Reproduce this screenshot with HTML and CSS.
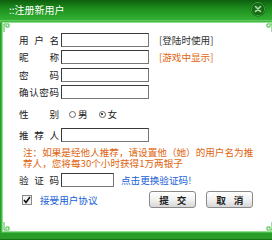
FILE: index.html
```html
<!DOCTYPE html>
<html>
<head>
<meta charset="utf-8">
<link rel="stylesheet" href="styles.css">
</head>
<body>
<div class="win">
  <div class="title">
    <span class="title-text">::注册新用户</span>
    <svg class="close" width="16" height="16" viewBox="0 0 16 16">
      <circle cx="8" cy="8" r="7.5" fill="#0f5a0f"/>
      <circle cx="8" cy="8" r="6.5" fill="none" stroke="#3fae3f" stroke-width="1"/>
      <circle cx="8" cy="8" r="5" fill="#1c6e1c"/>
      <path d="M5.5 5.5 L10.5 10.5 M10.5 5.5 L5.5 10.5" stroke="#a8e0a8" stroke-width="1.6" stroke-linecap="round"/>
    </svg>
  </div>
  <div class="frame">
    <div class="panel">
      <svg class="corner tl" width="10" height="10" viewBox="0 0 10 10"><path d="M1 9 V1 H6 V4 H3 V2" fill="none" stroke="#3dbb3d" stroke-width="1"/></svg>
      <svg class="corner tr" width="10" height="10" viewBox="0 0 10 10"><path d="M9 9 V1 H4 V4 H7 V2" fill="none" stroke="#3dbb3d" stroke-width="1"/></svg>
      <svg class="corner bl" width="10" height="10" viewBox="0 0 10 10"><path d="M1 1 V9 H6 V6 H3 V8" fill="none" stroke="#3dbb3d" stroke-width="1"/></svg>
      <svg class="corner br" width="10" height="10" viewBox="0 0 10 10"><path d="M9 1 V9 H4 V6 H7 V8" fill="none" stroke="#3dbb3d" stroke-width="1"/></svg>
      <div class="form">
        <div class="row r1">
          <span class="label"><i>用</i><i>户</i><i>名</i></span>
          <span class="input"></span>
          <span class="hint">[登陆时使用]</span>
        </div>
        <div class="row r2">
          <span class="label"><i>昵</i><i>称</i></span>
          <span class="input"></span>
          <span class="hint orange">[游戏中显示]</span>
        </div>
        <div class="row r3">
          <span class="label"><i>密</i><i>码</i></span>
          <span class="input"></span>
        </div>
        <div class="row r4">
          <span class="label"><i>确</i><i>认</i><i>密</i><i>码</i></span>
          <span class="input"></span>
        </div>
        <div class="row r5">
          <span class="label"><i>性</i><i>别</i></span>
          <span class="radio first"></span><span class="rtext">男</span>
          <span class="radio on"></span><span class="rtext">女</span>
        </div>
        <div class="row r6">
          <span class="label"><i>推</i><i>荐</i><i>人</i></span>
          <span class="input"></span>
        </div>
        <div class="note">
          <div class="nline">注：如果是经他人推荐，请设置他（她）的用户名为推</div>
          <div class="nline">荐人，您将每30个小时获得1万两银子</div>
        </div>
        <div class="row r7">
          <span class="label"><i>验</i><i>证</i><i>码</i></span>
          <span class="input short"></span>
          <span class="link">点击更换验证码!</span>
        </div>
        <div class="row r8">
          <span class="check"><svg width="8" height="8" viewBox="0 0 8 8"><path d="M1 4 L3 6.5 L7 1" fill="none" stroke="#111" stroke-width="1.6"/></svg></span>
          <span class="agree">接受用户协议</span>
          <span class="btns">
            <span class="btn"><i>提</i><i>交</i></span>
            <span class="btn"><i>取</i><i>消</i></span>
          </span>
        </div>
      </div>
    </div>
  </div>
</div>
</body>
</html>
```
FILE: styles.css
```css
html, body {
  margin: 0;
  padding: 0;
  background: #ffffff;
}
body {
  font-family: "Noto Sans CJK SC", "Noto Sans", sans-serif;
  font-size: 9.6px;
  color: #222;
}
i { font-style: normal; }
.win {
  width: 272px;
  height: 240px;
  display: flex;
  flex-direction: column;
  background: #2a9c2a;
}
.title {
  height: 20px;
  flex: none;
  display: flex;
  align-items: center;
  justify-content: space-between;
  padding: 0 6px 0 9px;
  background: linear-gradient(#0e5e0e 0%, #1b861b 35%, #27a027 70%, #34b034 100%);
}
.title-text {
  color: #ffffff;
  line-height: 20px;
  font-size: 10px;
}
.close { display: block; margin-top: -3px; }
.frame {
  flex: 1;
  display: flex;
  padding: 2px 4px 7px 2px;
  background: linear-gradient(#5ec85e 0px, #5ec85e 2px, #2a9c2a 3px);
  border-bottom: 1px solid #177517;
  min-height: 0;
}
.panel {
  position: relative;
  flex: 1;
  background: #ffffff;
  border: 1px solid #8fe08f;
  box-shadow: 0 0 0 1px #45b845;
}
.corner { position: absolute; }
.corner.tl { left: 0; top: 0; }
.corner.tr { right: 0; top: 0; }
.corner.bl { left: 0; bottom: 0; }
.corner.br { right: 0; bottom: 0; }
.form {
  padding: 10px 20px 0 16px;
  display: flex;
  flex-direction: column;
}
.row {
  display: flex;
  align-items: center;
  height: 14px;
}
.label {
  width: 40px;
  display: flex;
  justify-content: space-between;
  margin-right: 2px;
  flex: none;
}
.input {
  width: 88px;
  height: 14px;
  box-sizing: border-box;
  border: 1px solid #777;
  border-top-color: #3a3a3a;
  border-left-color: #3a3a3a;
  background: #fff;
  flex: none;
}
.input.short { width: 53px; }
.hint { margin-left: 10px; color: #333; }
.orange { color: #e0650f; }
.r2 { margin-top: 3px; }
.r3 { margin-top: 4px; }
.r4 { margin-top: 3px; }
.r5 { margin-top: 8px; }
.r6 { margin-top: 7px; }
.r7 { margin-top: 4px; }
.r8 { margin-top: 4px; height: 17px; }
.radio {
  width: 7px;
  height: 7px;
  border: 1px solid #666;
  border-radius: 50%;
  box-sizing: border-box;
  background: #fff;
  position: relative;
  flex: none;
  margin-left: 11px;
}
.radio.first { margin-left: 8px; }
.radio.on::after {
  content: "";
  position: absolute;
  left: 1.5px;
  top: 1.5px;
  width: 2px;
  height: 2px;
  border-radius: 50%;
  background: #111;
}
.rtext { margin-left: 2px; }
.note {
  margin-top: 5px;
  color: #e0650f;
  white-space: nowrap;
  margin-left: 4px;
  display: flex;
  flex-direction: column;
}
.nline {
  height: 11px;
  line-height: 11px;
  overflow: visible;
}
.link { margin-left: 7px; color: #1560d8; }
.check {
  width: 10px;
  height: 10px;
  box-sizing: border-box;
  border: 1px solid #888;
  background: #f2f2f2;
  margin-left: 3px;
  display: flex;
  align-items: center;
  justify-content: center;
}
.check svg { display: block; }
.agree { margin-left: 8px; color: #1560d8; }
.btns {
  margin-left: auto;
  display: flex;
  gap: 10px;
}
.btn {
  width: 47px;
  height: 17px;
  box-sizing: border-box;
  border: 1px solid #8a8a8a;
  border-radius: 3px;
  background: linear-gradient(#ffffff 0%, #f2f2f2 50%, #d6d6d6 100%);
  display: flex;
  align-items: center;
  justify-content: center;
  gap: 8px;
  color: #222;
  font-weight: bold;
}
```
